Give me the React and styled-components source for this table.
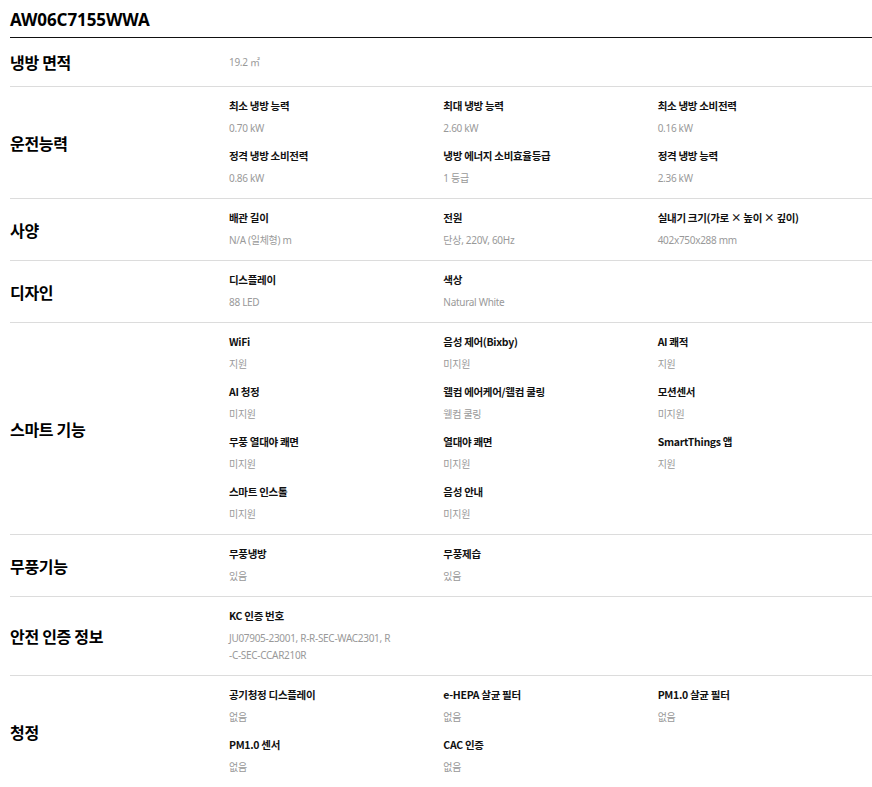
import React from "react";
import styled, { createGlobalStyle } from "styled-components";

const Global = createGlobalStyle`
  html, body { margin: 0; padding: 0; background: #fff; }
  body { font-family: "Noto Sans", "Noto Sans CJK KR", sans-serif; color: #000; }
`;

const Page = styled.div`
  padding: 8px 0 0 10px;
  width: 862px;
`;

const Heading = styled.h2`
  margin: 0;
  font-size: 17px;
  font-weight: 700;
  line-height: 24px;
  letter-spacing: -0.1px;
  padding-bottom: 5px;
  border-bottom: 1.5px solid #111;
`;

const Row = styled.div`
  display: grid;
  grid-template-columns: 219px 1fr;
  align-items: center;
  border-bottom: 1px solid #dcdcdc;
  min-height: ${(p) => p.$min || 0}px;
`;

const Label = styled.div`
  font-family: "Noto Sans CJK KR", sans-serif;
  font-size: 16px;
  font-weight: 700;
  letter-spacing: -0.3px;
`;

const Items = styled.div`
  display: grid;
  grid-template-columns: repeat(3, 1fr);
  row-gap: 9px;
  padding: 9px 0 11px;
`;

const Item = styled.div`
  display: flex;
  flex-direction: column;
  padding-right: 30px;
`;

const Title = styled.div`
  font-family: "Noto Sans CJK KR", sans-serif;
  font-size: 10.5px;
  font-weight: 700;
  line-height: 20px;
  letter-spacing: -0.3px;
  color: #111;
`;

const Value = styled.div`
  font-family: "Noto Sans", "Noto Sans CJK KR", sans-serif;
  font-size: 10px;
  line-height: 17px;
  margin-top: 4px;
  color: #999;
  letter-spacing: -0.3px;
  white-space: pre-line;
`;

const Plain = styled(Value)`
  margin-top: 0;
`;

const data = [
  {
    label: "운전능력",
    items: [
      ["최소 냉방 능력", "0.70 kW"],
      ["최대 냉방 능력", "2.60 kW"],
      ["최소 냉방 소비전력", "0.16 kW"],
      ["정격 냉방 소비전력", "0.86 kW"],
      ["냉방 에너지 소비효율등급", "1 등급"],
      ["정격 냉방 능력", "2.36 kW"],
    ],
  },
  {
    label: "사양",
    items: [
      ["배관 길이", "N/A (일체형) m"],
      ["전원", "단상, 220V, 60Hz"],
      ["실내기 크기(가로 × 높이 × 깊이)", "402x750x288 mm"],
    ],
  },
  {
    label: "디자인",
    items: [
      ["디스플레이", "88 LED"],
      ["색상", "Natural White"],
    ],
  },
  {
    label: "스마트 기능",
    items: [
      ["WiFi", "지원"],
      ["음성 제어(Bixby)", "미지원"],
      ["AI 쾌적", "지원"],
      ["AI 청정", "미지원"],
      ["웰컴 에어케어/웰컴 쿨링", "웰컴 쿨링"],
      ["모션센서", "미지원"],
      ["무풍 열대야 쾌면", "미지원"],
      ["열대야 쾌면", "미지원"],
      ["SmartThings 앱", "지원"],
      ["스마트 인스톨", "미지원"],
      ["음성 안내", "미지원"],
    ],
  },
  {
    label: "무풍기능",
    items: [
      ["무풍냉방", "있음"],
      ["무풍제습", "있음"],
    ],
  },
  {
    label: "안전 인증 정보",
    items: [["KC 인증 번호", "JU07905-23001, R-R-SEC-WAC2301, R\n-C-SEC-CCAR210R"]],
  },
  {
    label: "청정",
    items: [
      ["공기청정 디스플레이", "없음"],
      ["e-HEPA 살균 필터", "없음"],
      ["PM1.0 살균 필터", "없음"],
      ["PM1.0 센서", "없음"],
      ["CAC 인증", "없음"],
    ],
  },
];

export default function App() {
  return (
    <>
      <Global />
      <Page>
        <Heading>AW06C7155WWA</Heading>
        <Row $min={48}>
          <Label>냉방 면적</Label>
          <Plain>19.2 ㎡</Plain>
        </Row>
        {data.map((sec) => (
          <Row key={sec.label}>
            <Label>{sec.label}</Label>
            <Items>
              {sec.items.map(([t, v]) => (
                <Item key={t}>
                  <Title>{t}</Title>
                  <Value>{v}</Value>
                </Item>
              ))}
            </Items>
          </Row>
        ))}
      </Page>
    </>
  );
}
